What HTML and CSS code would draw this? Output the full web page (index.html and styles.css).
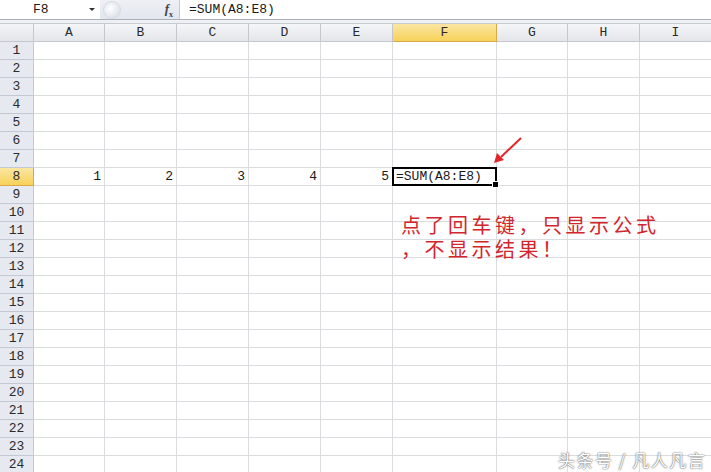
FILE: index.html
```html
<!DOCTYPE html>
<html lang="zh-CN">
<head>
    <meta charset="UTF-8">
    <title>SUM</title>
    <link rel="stylesheet" href="styles.css">
</head>
<body>
    <div class="formula-bar">
        <div class="name-box">F8<span class="dropdown"></span></div>
        <div class="fx-area">
            <span class="cancel"></span>
            <span class="fx"><i>f</i><sub>x</sub></span>
        </div>
        <div class="formula">=SUM(A8:E8)</div>
    </div>
    <div class="bar-gap"></div>

    <div class="sheet" id="sheet"></div>

    <svg class="arrow" width="711" height="472" viewBox="0 0 711 472">
        <line x1="521" y1="138" x2="501" y2="157" stroke="#e3262a" stroke-width="2"/>
        <polygon points="494,163 497,153 504,160" fill="#e3262a"/>
    </svg>

    <div class="note">
        <div>点了回车键，只显示公式</div>
        <div>，不显示结果！</div>
    </div>
    <div class="watermark">头条号 / 凡人凡言</div>

    <script>
        const cols = ['A', 'B', 'C', 'D', 'E', 'F', 'G', 'H', 'I'];
        const sheet = document.getElementById('sheet');

        function addCell(cls, text) {
            const cell = document.createElement('div');
            cell.className = cls;
            cell.textContent = text || '';
            sheet.appendChild(cell);
            return cell;
        }

        addCell('corner');
        cols.forEach(c => addCell(c === 'F' ? 'col-head selected' : 'col-head', c));

        for (let r = 1; r <= 24; r++) {
            addCell(r === 8 ? 'row-head selected' : 'row-head', r);
            cols.forEach((c, i) => {
                if (r === 8 && i < 5) {
                    addCell('cell num', i + 1);
                } else if (r === 8 && c === 'F') {
                    addCell('cell active', '=SUM(A8:E8)');
                } else {
                    addCell('cell');
                }
            });
        }
    </script>
</body>
</html>
```

FILE: styles.css
```css
body {
    margin: 0;
    width: 711px;
    height: 472px;
    overflow: hidden;
    position: relative;
    background-color: #ffffff;
    font-family: 'Liberation Mono', 'Noto Sans CJK SC', monospace;
    font-size: 13px;
    color: #1a1a1a;
}

.formula-bar {
    display: flex;
    height: 19px;
    border-bottom: 1px solid #a9b1bb;
    background-color: #ffffff;
}

.name-box {
    width: 100px;
    padding-left: 33px;
    box-sizing: border-box;
    line-height: 19px;
    position: relative;
}

.dropdown {
    position: absolute;
    left: 89px;
    top: 8px;
    border-left: 3px solid transparent;
    border-right: 3px solid transparent;
    border-top: 3px solid #333;
}

.fx-area {
    width: 80px;
    display: flex;
    align-items: center;
    justify-content: space-between;
    padding: 0 6px 0 3px;
    box-sizing: border-box;
    background: linear-gradient(#eef0f5, #e2e6ee);
    border-right: 1px solid #c4c9d2;
}

.cancel {
    width: 16px;
    height: 16px;
    border-radius: 50%;
    background: radial-gradient(circle at 40% 40%, #ffffff, #dfe3ea 70%);
    border: 1px solid #d6dbe3;
}

.fx {
    font-family: 'Liberation Serif', serif;
    font-size: 13px;
    font-weight: bold;
    color: #444;
}

.fx sub {
    font-size: 8px;
}

.formula {
    padding-left: 9px;
    line-height: 19px;
}

.bar-gap {
    height: 3px;
    background-color: #eef0f3;
    border-bottom: 1px solid #c6cbd2;
}

.sheet {
    display: grid;
    grid-template-columns: 34px 71px 72px 72px 72px 72px 104px 71px 72px 72px;
    grid-auto-rows: 18px;
}

.sheet > div {
    box-sizing: border-box;
    border-right: 1px solid #dadcdf;
    border-bottom: 1px solid #dadcdf;
    line-height: 17px;
    white-space: nowrap;
}

.corner {
    background: linear-gradient(#f3f4f6, #e2e5ea);
    border-color: #c4c8ce !important;
}

.col-head {
    text-align: center;
    background: linear-gradient(#f5f6f8, #e4e6ea);
    border-color: #c4c8ce !important;
    color: #2b2b2b;
}

.row-head {
    text-align: center;
    background-color: #e6e9f0;
    border-color: #c4c8d2 !important;
    color: #2b2b2b;
}

.sheet > .selected {
    background: linear-gradient(#fbe6a2, #f7d159);
    border-color: #d9a94a !important;
}

.num {
    text-align: right;
    padding-right: 3px;
}

.active {
    position: relative;
    padding-left: 3px;
}

.active::after {
    content: '';
    position: absolute;
    left: -1px;
    top: -1px;
    right: -1px;
    bottom: -1px;
    border: 2px solid #000000;
}

.active::before {
    content: '';
    position: absolute;
    right: -3px;
    bottom: -3px;
    width: 5px;
    height: 5px;
    background-color: #000000;
    border: 1px solid #ffffff;
    z-index: 1;
}

.arrow {
    position: absolute;
    left: 0;
    top: 0;
    pointer-events: none;
}

.note {
    position: absolute;
    left: 401px;
    top: 213px;
    display: flex;
    flex-direction: column;
    font-family: 'Noto Sans CJK SC', sans-serif;
    font-size: 20px;
    letter-spacing: 3.5px;
    line-height: 24px;
    color: #d3262c;
}

.watermark {
    position: absolute;
    left: 558px;
    top: 447px;
    font-family: 'Noto Sans CJK SC', sans-serif;
    font-size: 17px;
    letter-spacing: 1.5px;
    color: #ffffff;
    text-shadow: 0 0 1px #555, 0 0 2px #777;
}
```
